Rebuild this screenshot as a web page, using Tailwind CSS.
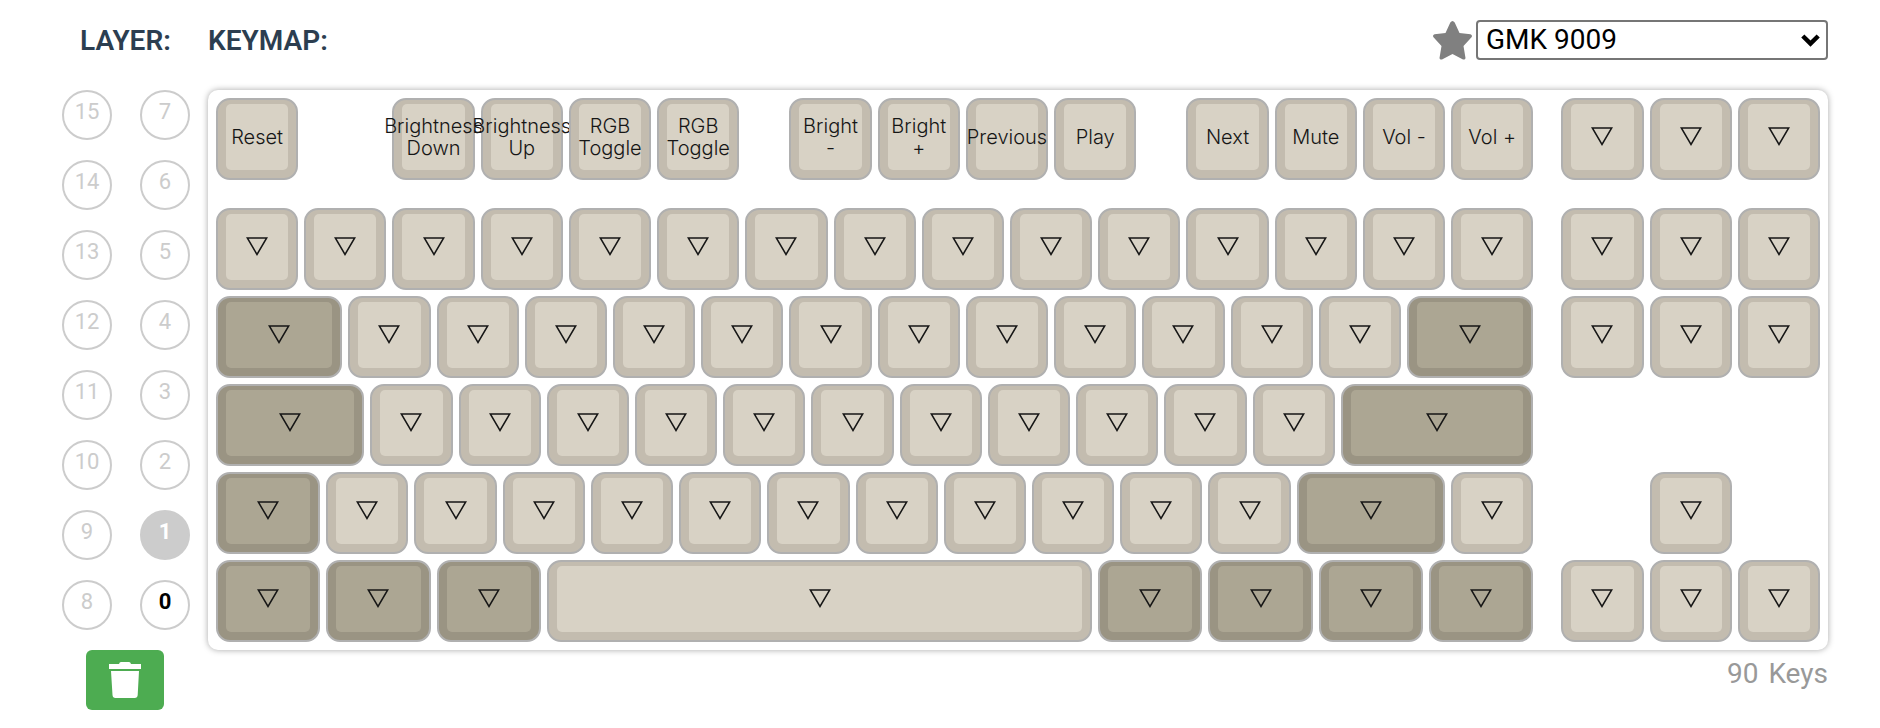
<!DOCTYPE html>
<html lang="en">
<head>
<meta charset="utf-8">
<meta name="viewport" content="width=device-width, initial-scale=1">
<title>Keymap</title>
<script src="https://cdn.jsdelivr.net/npm/@tailwindcss/browser@4"></script>
</head>
<body class="bg-white font-['Roboto',sans-serif]">
<main class="flex pl-[62px] pr-[52px] pt-5">
  <section class="mr-[18px] w-32 shrink-0" aria-labelledby="layer-title">
    <h2 id="layer-title" class="mb-[30px] h-10 pl-[18px] text-[28px] leading-[42px] font-semibold text-[#2c3e50]">LAYER:</h2>
    <div id="layers" class="grid grid-flow-col grid-cols-2 grid-rows-8 gap-x-7 gap-y-5"></div>
    <button type="button" aria-label="Clear layer" class="mt-5 ml-6 flex h-[60px] w-[78px] items-center justify-center rounded-md bg-[#4dac51]">
      <svg width="32" height="36" viewBox="0 0 32 36" fill="#fff" aria-hidden="true"><path d="M0 2h10Q10.500 0 12 0h8q1.500 0 2 2h10v5H0zM2 9h28l-1.300 24q-.2 3-3 3H6.500q-2.800 0-3-3z"/></svg>
    </button>
  </section>
  <section class="min-w-0 flex-1" aria-labelledby="keymap-title">
    <div class="mb-[30px] flex h-10 items-center justify-between">
      <h2 id="keymap-title" class="h-10 text-[28px] leading-[42px] font-semibold text-[#2c3e50]">KEYMAP:</h2>
      <div class="flex items-center gap-1">
        <button type="button" aria-label="Favorite colorway">
          <svg class="block" width="39" height="39" viewBox="0 0 39 39" fill="#808080" aria-hidden="true"><path d="M17.300 1.500q2.200-3 4.400 0L26.500 12l11 1.200q2.500 1 .8 3.400L30.500 25l2 12q-.2 2.200-2.500 1.400L19.500 33 9 38.400q-2.300.8-2.500-1.400l2-12L.7 16.600q-1.700-2.400.8-3.400l11-1.200z"/></svg>
        </button>
        <div class="relative">
          <select aria-label="Colorway" class="block h-10 w-[352px] appearance-none rounded border-2 border-[#767676] bg-white pl-2 text-[28px] leading-9 text-black">
            <option>GMK 9009</option>
          </select>
          <svg class="pointer-events-none absolute top-3.5 right-2" width="19" height="13" viewBox="0 0 19 13" fill="none" stroke="#000" stroke-width="4.500" aria-hidden="true"><path d="M1.800 2l7.700 7.500L17.200 2"/></svg>
        </div>
      </div>
    </div>
    <div id="keyboard" class="rounded-[10px] bg-white p-[5px] shadow-[0_0_6px_rgba(0,0,0,0.35)]"></div>
    <p class="mt-2 flex justify-end gap-2.5 text-[28px] leading-8 text-[#999]"><span>90</span> <span>Keys</span></p>
  </section>
</main>
<script>
// Layers 15-8 fill the left column, 7-0 the right one.
const layerBase = "flex size-[50px] items-center justify-center rounded-full border-2 border-[#ccc] pb-1.5 text-[22px] leading-6";
const layerTone = { empty: "text-[#ccc]", active: "bg-[#ccc] font-bold text-white", used: "font-bold text-black" };
document.getElementById("layers").innerHTML = Array.from({ length: 16 }, (_, i) => 15 - i)
  .map(n => `<button type="button" class="${layerBase} ${n === 1 ? layerTone.active : n === 0 ? layerTone.used : layerTone.empty}">${n}</button>`)
  .join("");

// Each key is [x, width, dark, label], in quarter key units.
const run = (x, n) => Array.from({ length: n }, (_, i) => [x + i * 4, 4]);
const labelled = (x, names) => names.map((name, i) => [x + i * 4, 4, false, name]);
const nav = run(61, 3);
const rows = [
  [...labelled(0, ["Reset"]), ...labelled(8, ["Brightness\nDown", "Brightness\nUp", "RGB\nToggle", "RGB\nToggle"]),
   ...labelled(26, ["Bright\n-", "Bright\n+", "Previous", "Play"]), ...labelled(44, ["Next", "Mute", "Vol -", "Vol +"]), ...nav],
  [...run(0, 15), ...nav],
  [[0, 6, true], ...run(6, 12), [54, 6, true], ...nav],
  [[0, 7, true], ...run(7, 11), [51, 9, true]],
  [[0, 5, true], ...run(5, 11), [49, 7, true], [56, 4], [65, 4]],
  [[0, 5, true], [5, 5, true], [10, 5, true], [15, 25], [40, 5, true], [45, 5, true], [50, 5, true], [55, 5, true], ...nav],
];
const rowClass = "grid grid-cols-[repeat(73,minmax(0,1fr))] first:mb-[22px]";
const keyClass = "m-[3px] flex h-[82px] rounded-[14px] border-2 border-[#b0b0b0] px-2 pt-1 pb-2";
const capClass = "flex min-w-0 flex-1 items-center justify-center rounded-[5px]";
const triangle = `<svg class="-mt-0.5 shrink-0" width="22" height="19" viewBox="0 0 22 19" fill="none" stroke="#161616" stroke-width="1.500" aria-hidden="true"><path d="M1.300 1h19.400L11 17.500z"/></svg>`;
document.getElementById("keyboard").innerHTML = rows.map(row => `<div class="${rowClass}">` + row.map(([x, w, dark, label]) =>
  `<button type="button" style="grid-column:${x + 1}/span ${w}" class="${keyClass} ${dark ? "bg-[#9a9483]" : "bg-[#c3bcaf]"}"${label ? "" : ' aria-label="Transparent"'}>` +
  `<span class="${capClass} ${dark ? "bg-[#aca693]" : "bg-[#d8d2c5]"}">` +
  (label ? `<span class="shrink-0 text-center font-['Inter',sans-serif] text-[20px] leading-[22px] font-light whitespace-pre text-[#161616]">${label}</span>` : triangle) +
  `</span></button>`).join("") + `</div>`).join("");
</script>
</body>
</html>
